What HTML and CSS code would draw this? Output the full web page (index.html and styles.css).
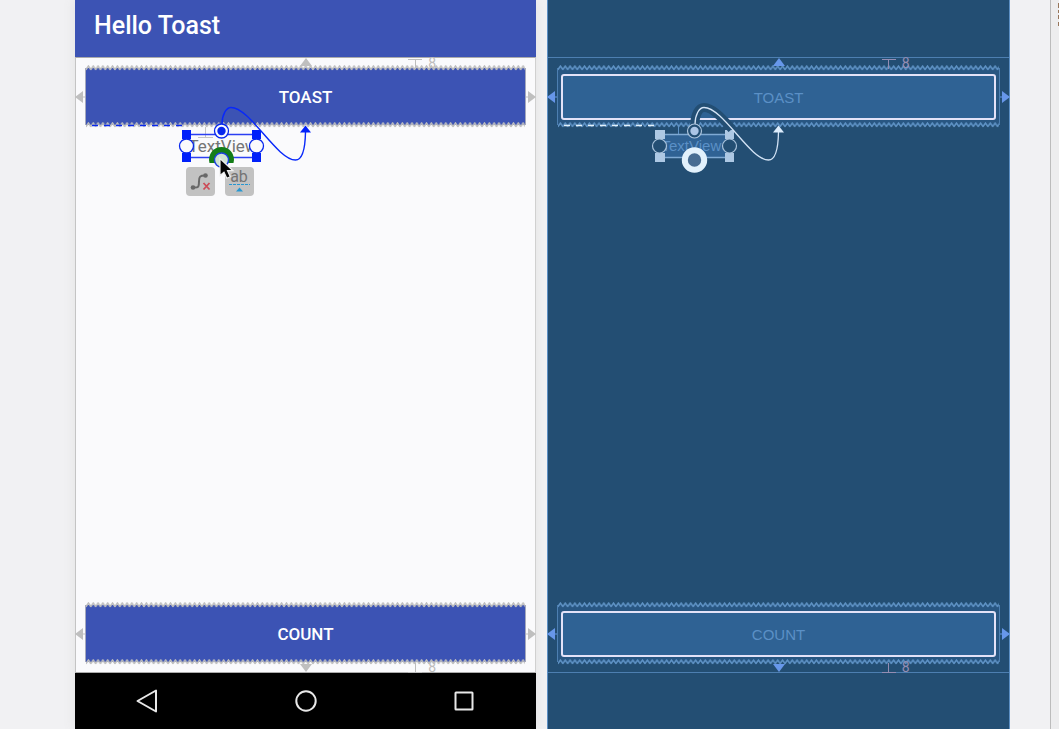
FILE: index.html
```html
<!DOCTYPE html>
<html lang="en">
<head>
<meta charset="utf-8">
<title>Hello Toast layout editor</title>
<link rel="stylesheet" href="styles.css">
</head>
<body>
<svg class="defs" aria-hidden="true">
  <defs>
    <pattern id="spring" width="4.83" height="6" patternUnits="userSpaceOnUse">
      <path d="M-.2 4.9 2.4 1.1 5 4.9" fill="none" stroke="#bdbdbd" stroke-width="1.6"/>
    </pattern>
    <pattern id="spring-blue" width="4.83" height="6" patternUnits="userSpaceOnUse">
      <path d="M-.2 4.9 2.4 1.1 5 4.9" fill="none" stroke="#5f93c6" stroke-width="1.5"/>
    </pattern>
    <symbol id="tri" viewBox="0 0 12 8"><path d="M0 8 6 0l6 8z"/></symbol>
    <symbol id="tri-side" viewBox="0 0 10 12"><path d="M0 6 8 0v12zM8 5.5h2v1H8z"/></symbol>
  </defs>
</svg>
<div class="editor">
  <main class="workspace">
    <section class="screen design" aria-label="Design">
      <header class="appbar"><h1 class="title">Hello Toast</h1></header>
      <div class="canvas">
        <div class="widget">
          <button class="face" type="button">TOAST</button>
          <svg class="spring top"><rect width="100%" height="6" fill="url(#spring)"/></svg>
          <svg class="spring bottom"><rect width="100%" height="6" fill="url(#spring)"/><path class="link-dash" d="M6 3.5h92"/></svg>
          <svg class="arrow left"><use href="#tri-side"/></svg>
          <svg class="arrow right"><use href="#tri-side"/></svg>
          <svg class="arrow up"><use href="#tri"/></svg>
          <div class="margin above"><i class="stem"></i><span>8</span></div>
        </div>
        <div class="widget">
          <button class="face" type="button">COUNT</button>
          <svg class="spring top"><rect width="100%" height="6" fill="url(#spring)"/></svg>
          <svg class="spring bottom"><rect width="100%" height="6" fill="url(#spring)"/></svg>
          <svg class="arrow left"><use href="#tri-side"/></svg>
          <svg class="arrow right"><use href="#tri-side"/></svg>
          <svg class="arrow down"><use href="#tri"/></svg>
          <div class="margin below"><i class="stem"></i><span>8</span></div>
        </div>
        <div class="selection">
          <span class="textview">TextView</span>
          <div class="tools">
            <button class="tool" type="button" aria-label="Delete constraints">
              <svg width="29" height="29" viewBox="0 0 29 29"><path d="M7 20.500c6 .5 6-1 6-6s1-6 6-6" fill="none" stroke="#686868" stroke-width="2"/><circle cx="7" cy="20.500" r="2.300" fill="#686868"/><circle cx="19.500" cy="8.500" r="2.300" fill="#686868"/><path d="m17.500 16 6 6.500m0-6.500-6 6.500" stroke="#cc4b57" stroke-width="1.800"/></svg>
            </button>
            <button class="tool" type="button" aria-label="Edit baseline">
              <span class="ab">ab</span>
              <svg class="baseline" width="29" height="12" viewBox="0 0 29 12"><path d="M4 .5h21" stroke="#2697d2" stroke-dasharray="3 1"/><path d="M11 7.500h7l-3.500-4z" fill="#2697d2"/></svg>
            </button>
          </div>
          <svg class="marks" width="132" height="90" viewBox="0 0 132 90" aria-hidden="true">
            <path d="M25.500 22v10M18 32.500h15" stroke="#c4c4c4"/>
            <path d="M6 29.500h71M6 52.500h71" stroke="#2b3ff2" stroke-width="1.500"/>
            <path d="M2 25h9v9H2zM72 25h9v9h-9zM2 48h9v9H2zM72 48h9v9h-9z" fill="#0020fa"/>
            <circle cx="6.500" cy="41" r="7" fill="#fafafc" stroke="#0828ee" stroke-width="1.300"/>
            <circle cx="76.500" cy="41" r="7" fill="#fafafc" stroke="#0828ee" stroke-width="1.300"/>
            <path d="M42 19.500C42 10 46 2.500 51 2.500 70 2.500 97 55 115.500 55c7 0 9.700-12 10-28" fill="none" stroke="#0828fa" stroke-width="1.400"/>
            <path d="m120 27.500 5.500-7 5.500 7z" fill="#0020fa"/>
            <circle cx="41.500" cy="26" r="7" fill="#fafafc" stroke="#0828ee" stroke-width="1.300"/>
            <circle cx="41.500" cy="26" r="4.200" fill="#0828ee"/>
            <path d="M29.500 58a12.500 12.500 0 1 1 24 0H46v2h-7v-2z" fill="#147d18"/>
            <circle cx="41.500" cy="55" r="7" fill="#d0e4d4" stroke="#1d40df" stroke-width="1.400"/>
            <path d="M40 53.500v17l4-3.400 2.800 6.200 3.500-1.500-2.800-6.100h5.500z" fill="#050505" stroke="#eee" stroke-width="1.200"/>
          </svg>
        </div>
      </div>
      <nav class="navbar" aria-label="System">
        <button class="nav" type="button" aria-label="Back"><svg width="32" height="32"><path d="M6.500 16 25 5.500v21z"/></svg></button>
        <button class="nav" type="button" aria-label="Home"><svg width="32" height="32"><circle cx="16" cy="16" r="9.700"/></svg></button>
        <button class="nav" type="button" aria-label="Recents"><svg width="32" height="32"><rect x="7.500" y="7.500" width="17" height="17" rx=".5"/></svg></button>
      </nav>
    </section>
    <section class="screen blueprint" aria-label="Blueprint">
      <div class="appbar"></div>
      <div class="canvas">
        <div class="widget">
          <button class="face" type="button">TOAST</button>
          <svg class="spring top"><rect width="100%" height="6" fill="url(#spring-blue)"/></svg>
          <svg class="spring bottom"><rect width="100%" height="6" fill="url(#spring-blue)"/><path class="link-dash" d="M6 3.500h92"/></svg>
          <svg class="arrow left"><use href="#tri-side"/></svg>
          <svg class="arrow right"><use href="#tri-side"/></svg>
          <svg class="arrow up"><use href="#tri"/></svg>
          <div class="margin above"><i class="stem"></i><span>8</span></div>
        </div>
        <div class="widget">
          <button class="face" type="button">COUNT</button>
          <svg class="spring top"><rect width="100%" height="6" fill="url(#spring-blue)"/></svg>
          <svg class="spring bottom"><rect width="100%" height="6" fill="url(#spring-blue)"/></svg>
          <svg class="arrow left"><use href="#tri-side"/></svg>
          <svg class="arrow right"><use href="#tri-side"/></svg>
          <svg class="arrow down"><use href="#tri"/></svg>
          <div class="margin below"><i class="stem"></i><span>8</span></div>
        </div>
        <div class="selection">
          <span class="textview">TextView</span>
          <svg class="marks" width="132" height="90" viewBox="0 0 132 90" aria-hidden="true">
            <path d="M25.500 21v9" stroke="#5f93c8"/>
            <path d="M6 29.500h71M6 52.500h71" stroke="#7faad4" stroke-width="1.500"/>
            <path d="M2 25h10v9H2zM72 25h9v9h-9zM2 48h10v9H2zM72 48h9v9h-9z" fill="#adc8e4"/>
            <circle cx="6.500" cy="41" r="7" fill="#234e73" stroke="#a9c2db" stroke-width="1.200"/>
            <circle cx="76.500" cy="41" r="7" fill="#234e73" stroke="#a9c2db" stroke-width="1.200"/>
            <path d="M41.500 21C42 9 46 2.500 51 2.500 60 2.500 70 14 79 24" fill="none" stroke="#234e73" stroke-width="9"/>
            <path d="M42 19.500C42 10 46 2.500 51 2.500 70 2.500 97 55 115.500 55c7 0 9.700-12 10-28" fill="none" stroke="#d3e3f5" stroke-width="1.300"/>
            <path d="m120 27.500 5.500-7 5.500 7z" fill="#dcecfc"/>
            <circle cx="41.500" cy="26" r="7" fill="#234e73" stroke="#a9c2db" stroke-width="1.200"/>
            <circle cx="41.500" cy="26" r="4.200" fill="#abc5e5"/>
            <circle cx="41.500" cy="55" r="9.700" fill="#476c92" stroke="#e2f1fc" stroke-width="6"/>
          </svg>
        </div>
      </div>
      <div class="footer"></div>
    </section>
  </main>
  <aside class="sidebar"><svg class="edge-mark" width="1" height="26"><path d="M0 3h1v5H0zM0 10h1v3H0zM0 15h1v4H0zM0 22h1v4H0z" fill="#97765b"/></svg></aside>
</div>
</body>
</html>
```
FILE: styles.css
```css
* { box-sizing: border-box; }
body { margin: 0; background: #f1f1f3; font-family: Roboto, "Liberation Sans", sans-serif; }
button { border: 0; margin: 0; padding: 0; background: none; font: inherit; color: inherit; }
svg { display: block; }
.defs { position: absolute; width: 0; height: 0; }
.editor { display: flex; min-height: 100vh; }
.workspace { flex: 1; display: flex; gap: 11px; padding: 0 40px 0 75px; }
.sidebar { width: 9px; border-left: 1px solid #bcbcbc; background: #ededee; display: flex; justify-content: flex-end; }

.screen { flex: 1 1 0; min-width: 0; display: flex; flex-direction: column; }
.appbar { height: 57px; display: flex; align-items: center; padding: 0 19px 6px; }
.title { margin: 0; font-size: 25px; font-weight: 500; line-height: 28px; color: #fff; }
.canvas { position: relative; flex: 1; display: flex; flex-direction: column; justify-content: space-between; padding: 10px 9px; border: 1px solid; }
.widget { position: relative; height: 57px; display: flex; border: solid; border-width: 0 1px; }
.face { flex: 1; text-align: center; }

.design { background: #fafafc; box-shadow: 0 0 12px #e2e2e2; }
.design .appbar { background: #3c53b4; }
.design .canvas { border-color: #ababab #d0d0d0 #ababab #c4c4c4; }
.design .widget { background: #3c53b4; border-color: #a5a9bd; }
.design .face { color: #fff; font-size: 17px; font-weight: 500; }

.blueprint { background: #234e73; border: solid #5c8fc4; border-width: 0 1px; }
.blueprint .canvas { border-color: #4d7fb1; border-width: 1px 0; }
.blueprint .widget { border-color: #4d7fb1; background: #285682; }
.blueprint .face { margin: 6px 3px 5px; border: 2px solid #e3e2f8; border-radius: 3px; background: #2f6294; color: #5b90c6; font-family: "Liberation Sans", sans-serif; font-size: 15px; }
.blueprint .footer { height: 56px; }

/* Constraint marks drawn over the widgets */
.spring { position: absolute; left: 0; width: 100%; height: 6px; }
.spring.top { top: -3px; }
.spring.bottom { bottom: -3px; }
.link-dash { fill: none; stroke: #0828ee; stroke-width: 1.5; stroke-dasharray: 6 6; }
.blueprint .link-dash { stroke: #e2f1fc; }
.arrow { position: absolute; fill: #bfbfbf; }
.blueprint .arrow { fill: #6797ea; }
.arrow.left, .arrow.right { top: 50%; width: 10px; height: 12px; margin-top: -6px; }
.arrow.left { left: -11px; }
.arrow.right { right: -11px; transform: scaleX(-1); }
.arrow.up, .arrow.down { left: 50%; width: 12px; height: 8px; margin-left: -6px; }
.arrow.up { top: -10px; }
.arrow.down { bottom: -10px; transform: scaleY(-1); }
.margin { position: absolute; left: 75%; margin-left: -7px; height: 11px; display: flex; gap: 6px; align-items: center; color: #bdbdbd; font-size: 14px; line-height: 11px; }
.margin.above { top: -10px; }
.margin.below { bottom: -11px; }
.stem { width: 14px; height: 10px; border-top: 1px solid; background: linear-gradient(currentColor, currentColor) center / 1px 100% no-repeat; }
.below .stem { border-top: 0; border-bottom: 1px solid; }
.blueprint .margin { color: #948db3; }

.selection { position: absolute; top: 47px; left: 50%; width: 132px; height: 90px; margin-left: -126px; }
.textview { position: absolute; left: 7px; top: 29px; width: 70px; height: 24px; padding-left: 2px; font-size: 17px; line-height: 24px; color: #757575; }
.blueprint .textview { background: #2f6294; color: #5b90c6; font-family: "Liberation Sans", sans-serif; font-size: 15px; }
.marks { position: absolute; left: 0; top: 0; overflow: visible; pointer-events: none; }
.tools { position: absolute; left: 6px; top: 62px; display: flex; gap: 10px; }
.tool { width: 29px; height: 29px; border-radius: 4px; background: #c2c2c2; display: flex; flex-direction: column; align-items: center; }
.ab { height: 17px; font-size: 16px; line-height: 20px; color: #747474; }

.navbar { height: 56px; padding: 0 56px; display: flex; align-items: center; justify-content: space-between; background: #000; }
.nav { width: 32px; height: 32px; }
.nav svg { fill: none; stroke: #e8e8e8; stroke-width: 2; stroke-linejoin: round; }
```
